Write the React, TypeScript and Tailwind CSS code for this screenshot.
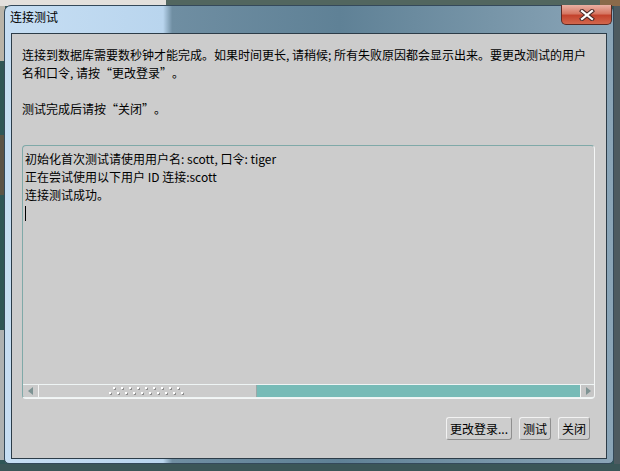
const FONT = "font-['Noto_Sans_CJK_SC','Liberation_Sans',sans-serif]";

function OpenQ() {
  return <span className="inline-block w-[12px] text-right">“</span>;
}

function CloseQ() {
  return <span className="inline-block w-[12px] text-left">”</span>;
}

function GripDots() {
  const top = Array.from({ length: 9 }, (_, i) => 4 + i * 8);
  const bottom = Array.from({ length: 10 }, (_, i) => i * 8);
  return (
    <svg width="78" height="9" viewBox="0 0 78 9">
      {top.map((x) => (
        <g key={"t" + x}>
          <rect x={x + 1} y={1} width="2" height="2" fill="#8e8e8e" />
          <rect x={x} y={0} width="2" height="2" fill="#ffffff" />
        </g>
      ))}
      {bottom.map((x) => (
        <g key={"b" + x}>
          <rect x={x + 1} y={6} width="2" height="2" fill="#8e8e8e" />
          <rect x={x} y={5} width="2" height="2" fill="#ffffff" />
        </g>
      ))}
    </svg>
  );
}

function HScrollBar() {
  return (
    <div className="flex h-[14px] border-y border-[#eef4f4]">
      <div className="flex w-[16px] items-center justify-center rounded-l-[6px] border-r border-[#f4f4f4] bg-[#cbcbcb]">
        <svg width="6" height="8" viewBox="0 0 6 8">
          <path d="M5 0 L0 4 L5 8 Z" fill="#7d9393" />
        </svg>
      </div>
      <div className="flex w-[218px] items-center justify-center border-r border-[#9aa8a8] bg-[#cccccc]">
        <GripDots />
      </div>
      <div className="flex-1 bg-[#77bbb7]" />
      <div className="flex w-[14px] items-center justify-center rounded-r-[4px] border-l border-[#f4f4f4] bg-[#c6c6c6]">
        <svg width="6" height="8" viewBox="0 0 6 8">
          <path d="M1 0 L6 4 L1 8 Z" fill="#7d9393" />
        </svg>
      </div>
    </div>
  );
}

function DlgButton({ label }: { label: string }) {
  return (
    <button className="h-[23px] rounded-[3px] border border-[#f2f2f2] border-r-[#8f8f8f] border-b-[#8f8f8f] bg-[#cdcdcd] px-[3px] text-[12px] leading-[18px] text-black">
      {label}
    </button>
  );
}

export default function App() {
  return (
    <div
      lang="zh-CN"
      className={`relative h-[471px] w-[620px] overflow-hidden bg-[#2f5657] ${FONT}`}
    >
      {/* desktop behind the dialog */}
      <div className="absolute left-0 top-0 h-[6px] w-[166px] bg-[#e3e0dc]" />
      <div className="absolute left-[166px] top-0 h-[6px] w-[434px] bg-[#52665f]" />
      <div className="absolute left-[600px] top-0 h-[6px] w-[20px] bg-[#8a6a4a]" />
      <div className="absolute left-0 top-[6px] h-[55px] w-[5px] bg-[#b9b4a8]" />
      <div className="absolute left-0 top-[135px] h-[60px] w-[5px] bg-[#5c5446]" />
      <div className="absolute left-0 top-[330px] h-[130px] w-[5px] bg-[#aeb2b2]" />
      <div className="absolute left-[614px] top-[6px] h-[465px] w-[6px] bg-[#4d5a60]" />
      <div className="absolute left-0 top-[464px] h-[7px] w-[620px] bg-[#3b5658]" />

      {/* dialog window */}
      <div className="relative ml-[4px] mt-[5px] flex h-[459px] w-[610px] flex-col rounded-t-[7px] rounded-b-[5px] border border-[#34495a] bg-[linear-gradient(to_right,#c6def3_0%,#b9d5ee_26%,#6f8ea2_27.5%,#5f8196_55%,#7795a8_80%,#8aa5b8_100%)]">
        <div className="flex h-[27px] shrink-0 items-start justify-between">
          <span className="pl-[5px] pt-[2px] text-[12px] leading-[18px] text-black">
            连接测试
          </span>
          <div className="mr-[1px] mt-[-1px] flex h-[20px] w-[51px] items-center justify-center rounded-b-[5px] border border-t-0 border-[#5a2a24] bg-[linear-gradient(to_bottom,#eab1a4_0%,#d67763_45%,#c4432d_55%,#d2674d_100%)]">
            <svg width="16" height="12" viewBox="0 0 16 12">
              <path
                d="M3 2 L13 10 M13 2 L3 10"
                stroke="#4a2a28"
                strokeWidth="4.2"
                strokeLinecap="square"
              />
              <path
                d="M3 2 L13 10 M13 2 L3 10"
                stroke="#ffffff"
                strokeWidth="2.2"
                strokeLinecap="square"
              />
            </svg>
          </div>
        </div>

        <div className="mx-[6px] mb-[4px] flex flex-1 flex-col border border-[#2c3c48] bg-[#cccccc] text-black">
          <div className="pl-[10px] pt-[12px] text-[12px] leading-[18px]">
            <p>
              连接到数据库需要数秒钟才能完成。如果时间更长, 请稍候; 所有失败原因都会显示出来。要更改测试的用户
            </p>
            <p>
              名和口令, 请按<OpenQ />更改登录<CloseQ />。
            </p>
            <p>&nbsp;</p>
            <p>
              测试完成后请按<OpenQ />关闭<CloseQ />。
            </p>
          </div>

          <div className="ml-[10px] mr-[11px] mt-[27px] flex h-[254px] flex-col rounded-[4px] border border-[#7fa9a8] border-r-[#f4f6f6] border-b-[#f4f6f6]">
            <div className="flex-1 pl-[2px] pt-[4px] text-[12px] leading-[18px]">
              <div>初始化首次测试请使用用户名: scott, 口令: tiger</div>
              <div>正在尝试使用以下用户 ID 连接:scott</div>
              <div>连接测试成功。</div>
              <div className="flex h-[18px] items-center">
                <span className="h-[15px] w-px bg-black" />
              </div>
            </div>
            <HScrollBar />
          </div>

          <div className="mr-[16px] mt-[18px] flex justify-end gap-[7px]">
            <DlgButton label="更改登录..." />
            <DlgButton label="测试" />
            <DlgButton label="关闭" />
          </div>
        </div>
      </div>
    </div>
  );
}
